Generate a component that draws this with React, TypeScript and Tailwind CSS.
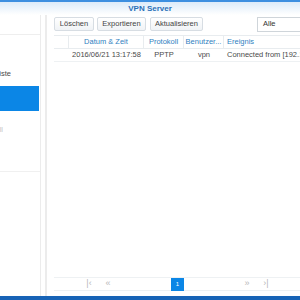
import { useState } from 'react';

const columns = [
  { key: 'check', label: '', width: 'w-[15px]', align: 'text-center' },
  { key: 'time', label: 'Datum & Zeit', width: 'w-[75px]', align: 'text-center' },
  { key: 'proto', label: 'Protokoll', width: 'w-[40px]', align: 'text-center' },
  { key: 'user', label: 'Benutzer...', width: 'w-[40px]', align: 'text-center' },
  { key: 'event', label: 'Ereignis', width: 'flex-1', align: 'text-left pl-[3px]' },
];

const rows = [
  {
    check: '',
    time: '2016/06/21 13:17:58',
    proto: 'PPTP',
    user: 'vpn',
    event: 'Connected from [192.168.1.100]',
  },
];

function ToolButton({ label, w }: { label: string; w: string }) {
  return (
    <button
      className={`${w} h-[14px] shrink-0 rounded-[2px] border border-[#d7dde3] bg-gradient-to-b from-white to-[#f0f3f6] text-[7.5px] leading-none text-[#444]`}
    >
      {label}
    </button>
  );
}

export default function App() {
  const [page] = useState(1);

  return (
    <div
      className="w-[300px] h-[300px] flex flex-col bg-white overflow-hidden"
      style={{ fontFamily: '"Liberation Sans", Arial, sans-serif' }}
    >
      {/* Title bar */}
      <div className="h-[2px] bg-[#3d8fe0]" />
      <div className="h-[13px] flex items-center justify-center bg-gradient-to-b from-[#dcebf9] to-white">
        <span className="text-[8px] font-bold text-[#2a70b8] leading-none">VPN Server</span>
      </div>

      <div className="flex-1 flex min-h-0">
        {/* Sidebar */}
        <div className="w-[41px] shrink-0 border-r border-[#ececec] flex flex-col">
          <div className="h-[20px] border-b border-[#eeeeee]" />
          <div className="h-[31px]" />
          <div className="h-[15px] w-[11px] flex justify-end items-center overflow-hidden whitespace-nowrap text-[7.5px] text-[#4a4a4a]">
            Verbindungsliste
          </div>
          <div className="h-[5px]" />
          <div className="h-[25px] w-[39px] bg-[#0b86e6]" />
          <div className="h-[14px]" />
          <div className="h-[10px] w-[3px] flex justify-end items-center overflow-hidden whitespace-nowrap text-[7.5px] text-[#c8c8c8]">
            Protokoll
          </div>
          <div className="h-[37px] border-b border-[#f0f0f0] w-[40px]" />
        </div>

        <div className="w-[4px] shrink-0" />

        {/* Main */}
        <div className="flex-1 min-w-0 border-l-2 border-[#ececec] pl-[7px] flex flex-col">
          <div className="h-[2px]" />
          <div className="flex items-center h-[14px]">
            <ToolButton label="Löschen" w="w-[40px]" />
            <div className="w-[3px]" />
            <ToolButton label="Exportieren" w="w-[49px]" />
            <div className="w-[4px]" />
            <ToolButton label="Aktualisieren" w="w-[53px]" />
            <div className="flex-1" />
            <div className="w-[50px] h-[15px] shrink-0 -mr-[7px] border border-[#cfd5da] bg-white flex items-center pl-[5px] text-[7.5px] text-[#333]">
              Alle
            </div>
          </div>

          <div className="h-[4px]" />
          {/* Table */}
          <div className="flex flex-col">
            <div className="flex h-[14px] border-y border-[#e8ecef]">
              {columns.map((c, i) => (
                <div
                  key={c.key}
                  className={`${c.width} shrink-0 ${c.align} ${i < columns.length - 1 ? 'border-r border-[#e8ecef]' : ''} text-[7.5px] text-[#2f7fc1] leading-[12px] whitespace-nowrap overflow-hidden`}
                >
                  {c.label}
                </div>
              ))}
            </div>
            {rows.map((r, ri) => (
              <div key={ri} className="flex h-[13px] border-b border-[#eef1f3]">
                {columns.map((c) => (
                  <div
                    key={c.key}
                    className={`${c.width} shrink-0 ${c.align} text-[7.5px] text-[#4a4a4a] leading-[12px] whitespace-nowrap overflow-hidden`}
                  >
                    {r[c.key as keyof typeof r]}
                  </div>
                ))}
              </div>
            ))}
          </div>

          <div className="flex-1" />

          {/* Pagination */}
          <div className="h-[14px] border-y border-[#eef1f3] flex items-center text-[9px] text-[#b9b9b9] mr-[-10px]">
            <div className="w-[31px]" />
            <span className="w-[8px] text-center">|‹</span>
            <div className="w-[11px]" />
            <span className="w-[8px] text-center">«</span>
            <div className="w-[59px]" />
            <div className="w-[13px] h-[13px] bg-[#0b86e6] text-white flex items-center justify-center text-[6px]">
              {page}
            </div>
            <div className="w-[59px]" />
            <span className="w-[8px] text-center">»</span>
            <div className="w-[11px]" />
            <span className="w-[8px] text-center">›|</span>
          </div>
          <div className="h-[5px]" />
        </div>
      </div>

      <div className="h-[4px] bg-[#1763b6]" />
    </div>
  );
}
